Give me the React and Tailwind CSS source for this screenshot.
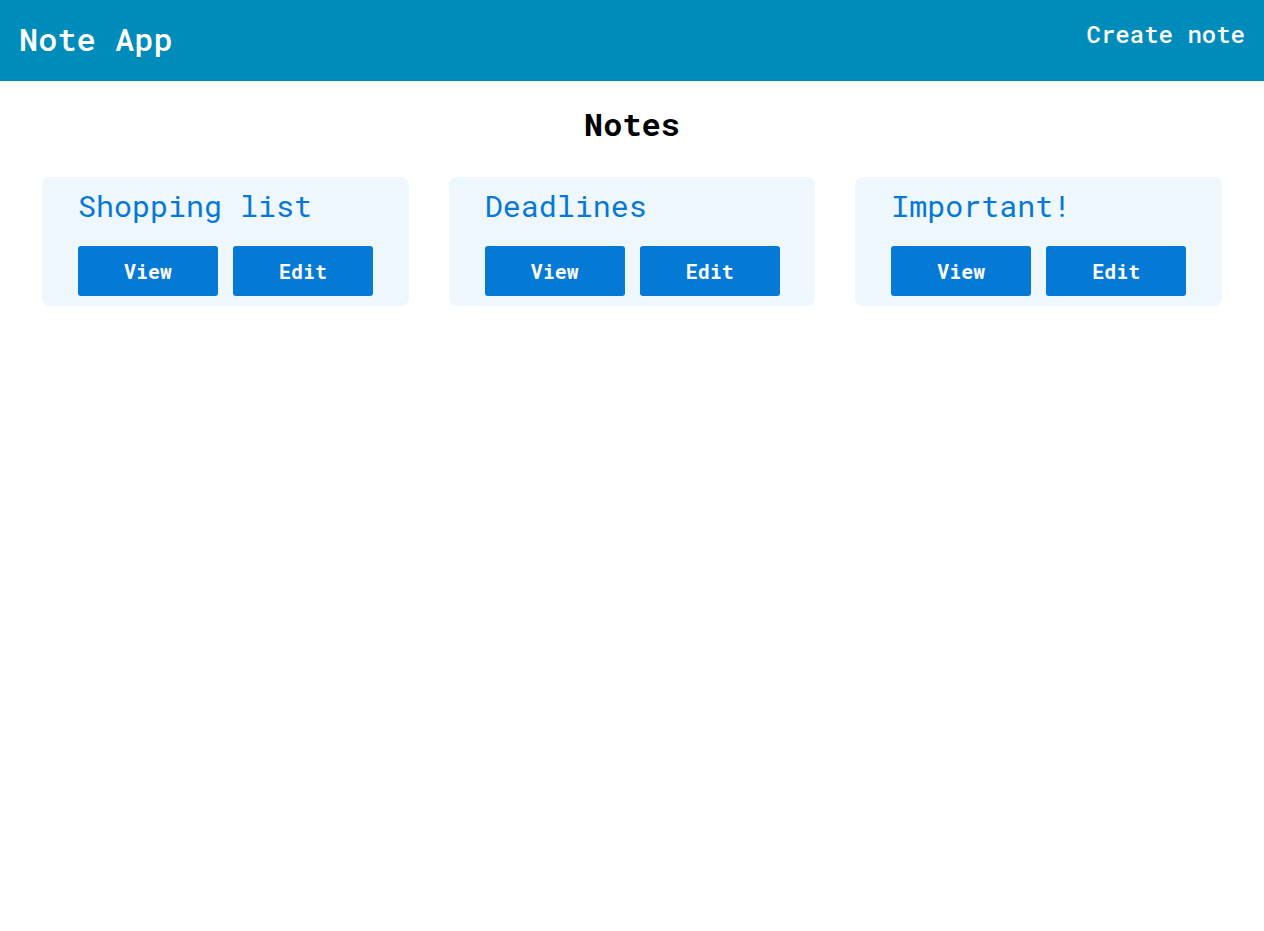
export default function App() {
  const notes = ["Shopping list", "Deadlines", "Important!"];
  return (
    <div className="min-h-[931px] bg-white" style={{ fontFamily: '"Roboto Mono", "DejaVu Sans Mono", monospace' }}>
      <header className="h-[81px] bg-[#008cba] flex items-start justify-between px-[19px]">
        <h1 className="text-[32px] font-medium text-white mt-[20px] leading-[1.2]">Note App</h1>
        <a className="text-[24px] font-medium text-white mt-[20px] leading-[1.2]">Create note</a>
      </header>
      <h2 className="text-[32px] font-bold text-black text-center pt-[24px] leading-[1.2]">Notes</h2>
      <div className="grid grid-cols-3 gap-[40px] px-[42px] mt-[34px]">
        {notes.map((n) => (
          <div key={n} className="bg-[#eef7fe] rounded-[8px] pl-[36px] pt-[11px] pb-[10px]">
            <h3 className="text-[30px] text-[#0677d6] leading-[1.2] mb-[22px]">{n}</h3>
            <div className="flex gap-[15px]">
              <button className="w-[140px] h-[50px] bg-[#0479d6] text-white text-[20px] font-bold rounded-[3px]">View</button>
              <button className="w-[140px] h-[50px] bg-[#0479d6] text-white text-[20px] font-bold rounded-[3px]">Edit</button>
            </div>
          </div>
        ))}
      </div>
    </div>
  );
}
